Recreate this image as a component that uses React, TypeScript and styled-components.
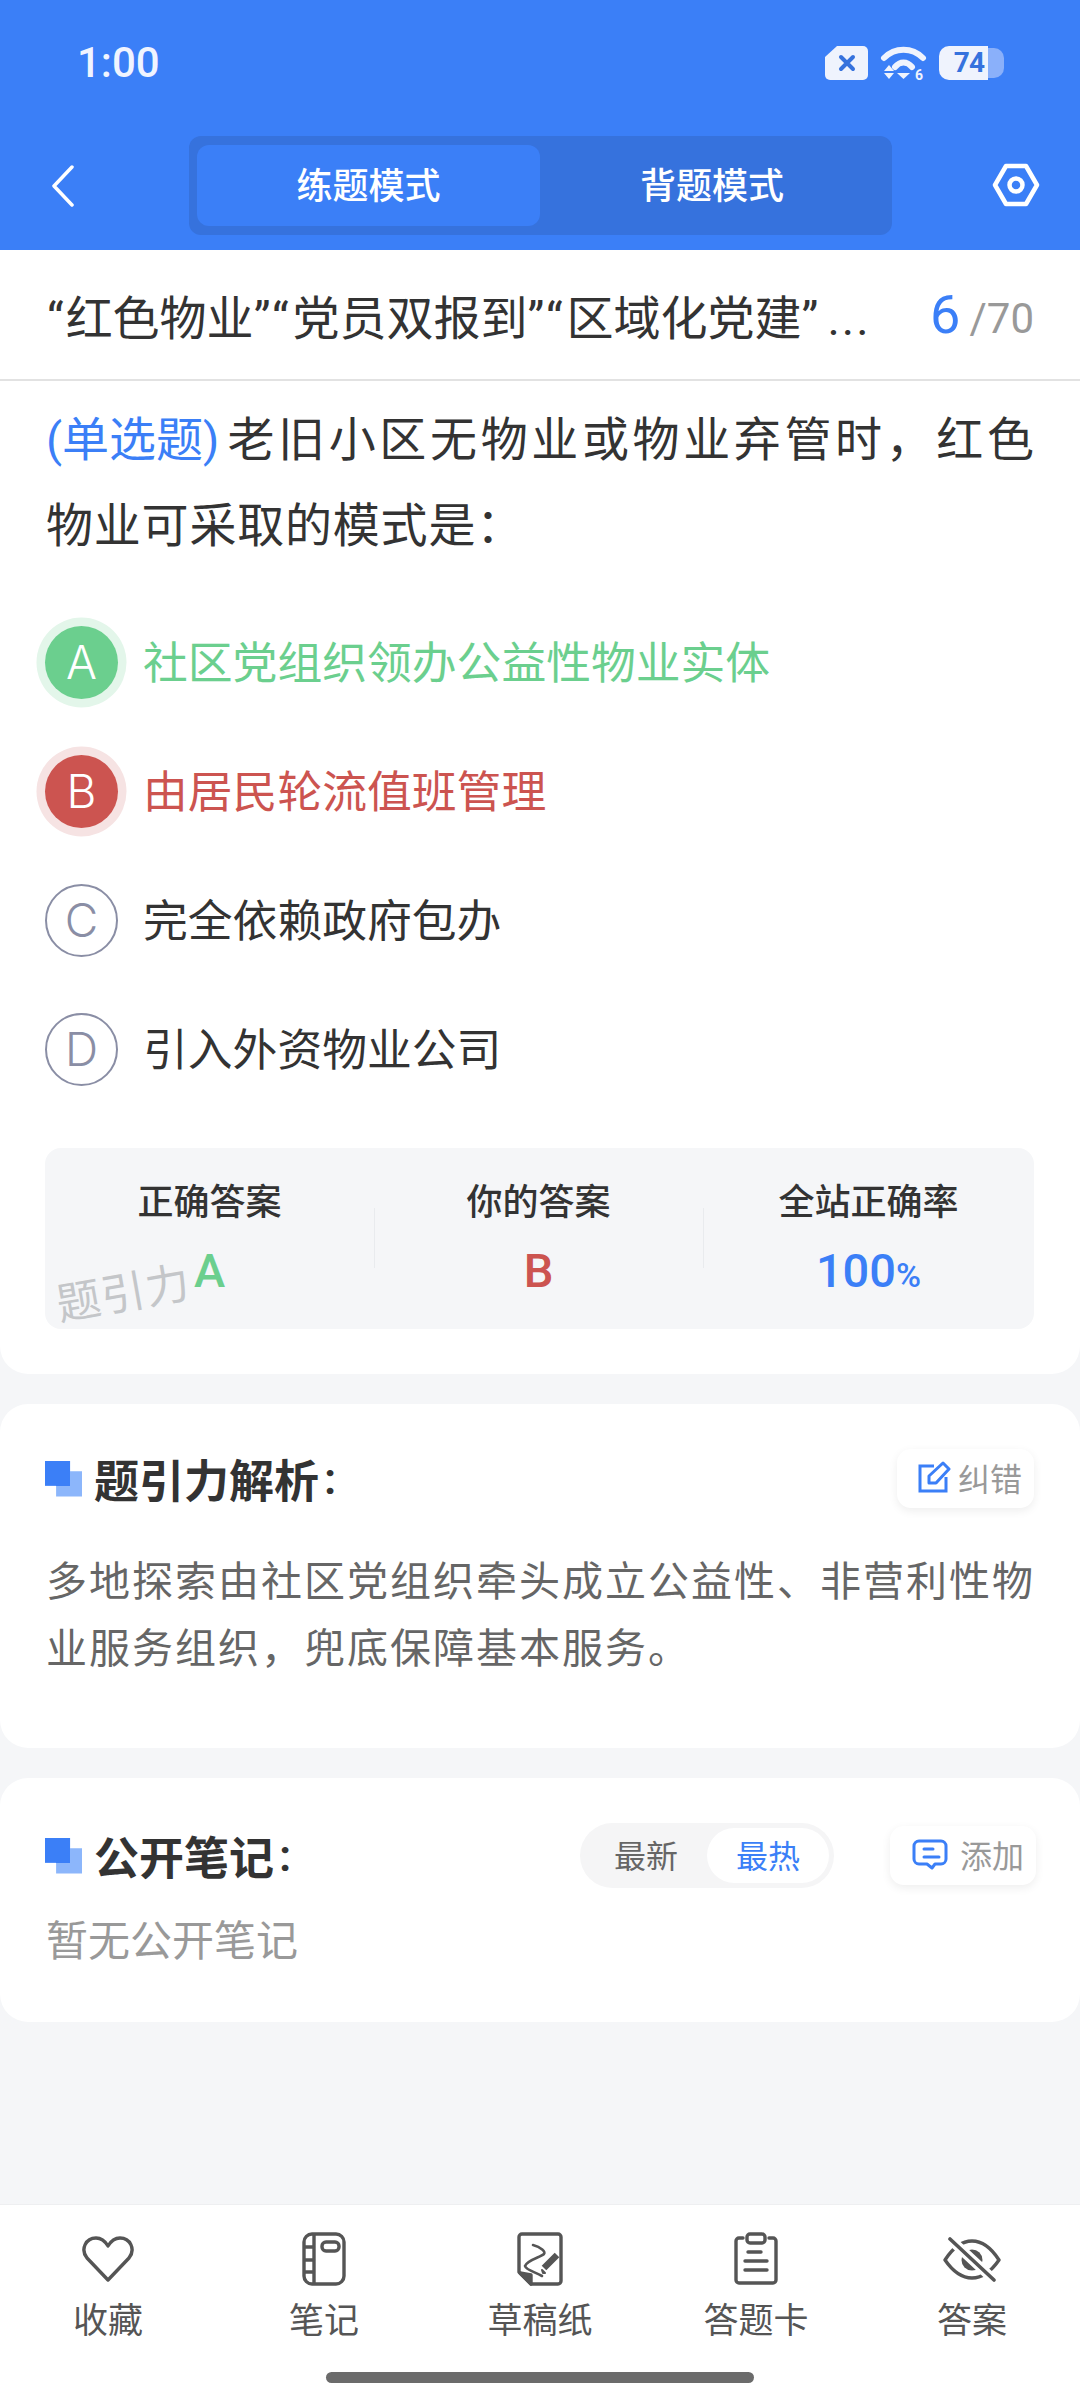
import React from "react";
import styled, { createGlobalStyle } from "styled-components";

const GlobalStyle = createGlobalStyle`
  html, body {
    margin: 0;
    padding: 0;
    background: #f5f6f8;
    font-family: "Roboto", "Noto Sans CJK SC", sans-serif;
  }
  * {
    box-sizing: border-box;
  }
`;

const options = [
  { key: "A", text: "社区党组织领办公益性物业实体", state: "right" },
  { key: "B", text: "由居民轮流值班管理", state: "wrong" },
  { key: "C", text: "完全依赖政府包办", state: "idle" },
  { key: "D", text: "引入外资物业公司", state: "idle" },
] as const;

const stateColor = {
  right: "#6bcf8e",
  wrong: "#cc5450",
  idle: "#333333",
};

const stateHalo = {
  right: "#e3f6ea",
  wrong: "#f6e3e3",
  idle: "transparent",
};

const BackIcon = () => (
  <svg width="24" height="42" viewBox="0 0 24 42" fill="none" stroke="#fff" strokeWidth="3.5" strokeLinecap="round" strokeLinejoin="round">
    <path d="M21 2 L3 21 L21 40" />
  </svg>
);

const HexIcon = () => (
  <svg width="48" height="44" viewBox="0 0 48 44" fill="none" stroke="#fff" strokeWidth="4.5" strokeLinejoin="round">
    <path d="M3 22 L14 3 H34 L45 22 L34 41 H14 Z" />
    <circle cx="24" cy="22" r="6.5" />
  </svg>
);

const SimIcon = () => (
  <svg width="43" height="34" viewBox="0 0 43 34">
    <path d="M12 0 H38 a5 5 0 0 1 5 5 V29 a5 5 0 0 1 -5 5 H5 a5 5 0 0 1 -5 -5 V11 Z" fill="#eff3fd" />
    <path d="M16 11 L28 23 M28 11 L16 23" stroke="#3672dd" strokeWidth="4" strokeLinecap="round" />
  </svg>
);

const WifiIcon = () => (
  <svg width="47" height="37" viewBox="0 0 47 37" fill="none">
    <path d="M4 12 C 15 1 32 1 43 12" stroke="#eff3fd" strokeWidth="6" strokeLinecap="round" />
    <path d="M15 21 C 20 15 27 15 32 21" stroke="#eff3fd" strokeWidth="6" strokeLinecap="round" />
    <path d="M17 27 H30 L23.5 33 Z" fill="#eff3fd" />
    <path d="M9 19 L14 25 H4 Z M4 27 H14 L9 33 Z" fill="#eff3fd" />
    <text x="35" y="34" fontFamily="Roboto" fontWeight="700" fontSize="14" fill="#eff3fd">6</text>
  </svg>
);

const EditIcon = () => (
  <svg width="34" height="32" viewBox="0 0 34 32" fill="none" stroke="#3b7ff7" strokeWidth="3">
    <path d="M16 5 H2 V30 H28 V16" />
    <path d="M11 22 V15 L25 2 L31 8 L18 22 Z" strokeLinejoin="round" />
  </svg>
);

const CommentIcon = () => (
  <svg width="36" height="31" viewBox="0 0 36 31" fill="none" stroke="#3b7ff7" strokeWidth="3" strokeLinecap="round" strokeLinejoin="round">
    <path d="M7 2 H29 a5 5 0 0 1 5 5 V20 a5 5 0 0 1 -5 5 H23 l-3 4 -5 -4 H7 a5 5 0 0 1 -5 -5 V7 a5 5 0 0 1 5 -5 Z" />
    <path d="M12 10 H21 M12 18 H27" />
  </svg>
);

const HeartIcon = () => (
  <svg width="52" height="46" viewBox="0 0 52 46" fill="none" stroke="#555" strokeWidth="3.4" strokeLinejoin="round">
    <path d="M26 44 L5 22 C -2 13 4 2 14 2 C 19 2 23 5 26 10 C 29 5 33 2 38 2 C 48 2 54 13 47 22 Z" />
  </svg>
);

const NotebookIcon = () => (
  <svg width="44" height="54" viewBox="0 0 44 54" fill="none" stroke="#555" strokeWidth="3.4">
    <rect x="2" y="2" width="40" height="50" rx="8" />
    <path d="M12 2 V52 M2 15 H12 M2 28 H12 M2 40 H12" />
    <rect x="20" y="10" width="17" height="9" rx="4" />
  </svg>
);

const DraftIcon = () => (
  <svg width="46" height="54" viewBox="0 0 46 54" fill="none" stroke="#555" strokeWidth="3.4" strokeLinejoin="round">
    <path d="M5 2 H41 a3 3 0 0 1 3 3 V49 a3 3 0 0 1 -3 3 H14 L2 40 V5 a3 3 0 0 1 3 -3 Z" />
    <path d="M3 41 L14 52 V43 Z" fill="#555" />
    <path d="M16 13 C 24 15 29 20 27 22 C 24 25 10 28 8 34 C 9 38 18 40 25 44" strokeWidth="2.6" strokeLinecap="round" />
    <path d="M27 36 L40 23" strokeWidth="6.5" />
    <path d="M26 41 L25 38 L28 41 Z" fill="#555" strokeWidth="2" />
  </svg>
);

const CardIcon = () => (
  <svg width="46" height="54" viewBox="0 0 46 54" fill="none" stroke="#555" strokeWidth="3.4" strokeLinecap="round" strokeLinejoin="round">
    <path d="M10 6 H6 a3 3 0 0 0 -3 3 V48 a3 3 0 0 0 3 3 H40 a3 3 0 0 0 3 -3 V9 a3 3 0 0 0 -3 -3 H36" />
    <rect x="14" y="2" width="18" height="9" rx="3" />
    <path d="M15 20 H28 M12 29 H34 M12 38 H34" />
  </svg>
);

const EyeIcon = () => (
  <svg width="58" height="46" viewBox="0 0 58 46" fill="none" strokeLinecap="round" strokeLinejoin="round">
    <path d="M2 24 C 11 10 20 5 29 5 C 38 5 47 10 56 24 C 47 37 38 42 29 42 C 20 42 11 37 2 24 Z" stroke="#555" strokeWidth="3.4" />
    <circle cx="29" cy="24" r="10.5" fill="#555" />
    <path d="M7 3 L51 44" stroke="#fff" strokeWidth="10" />
    <path d="M7 3 L51 44" stroke="#555" strokeWidth="3.6" />
  </svg>
);

const tools = [
  { label: "收藏", icon: <HeartIcon /> },
  { label: "笔记", icon: <NotebookIcon /> },
  { label: "草稿纸", icon: <DraftIcon /> },
  { label: "答题卡", icon: <CardIcon /> },
  { label: "答案", icon: <EyeIcon /> },
];

export default function App() {
  return (
    <Page>
      <GlobalStyle />
      <Header>
        <StatusBar>
          <Clock>1:00</Clock>
          <StatusIcons>
            <SimIcon />
            <WifiIcon />
            <Battery>
              <BatteryLevel>74</BatteryLevel>
              <BatteryRest />
            </Battery>
          </StatusIcons>
        </StatusBar>
        <NavBar>
          <BackButton>
            <BackIcon />
          </BackButton>
          <ModeTabs>
            <ModeTab $active>练题模式</ModeTab>
            <ModeTab>背题模式</ModeTab>
          </ModeTabs>
          <SettingButton>
            <HexIcon />
          </SettingButton>
        </NavBar>
      </Header>

      <Main>
        <QuestionCard>
          <TitleRow>
            <PaperTitle>
              <Spaced $gap={2}>“</Spaced>红色物业<Spaced $gap={4}>”“</Spaced>党员双报到<Spaced $gap={4}>”“</Spaced>区域化党建
              <Spaced $gap={9}>”</Spaced>
              <Spaced $gap={2}>...</Spaced>
            </PaperTitle>
            <Progress>
              <ProgressNow>6</ProgressNow>
              <ProgressTotal>/70</ProgressTotal>
            </Progress>
          </TitleRow>

          <Question>
            <QuestionFirstLine>
              <QuestionType>(单选题)</QuestionType>
              <QuestionRest>老旧小区无物业或物业弃管时，红色</QuestionRest>
            </QuestionFirstLine>
            <QuestionLine>物业可采取的模式是：</QuestionLine>
          </Question>

          <OptionList>
            {options.map((o) => (
              <OptionRow key={o.key}>
                <OptionBadge $state={o.state}>{o.key}</OptionBadge>
                <OptionText $state={o.state}>{o.text}</OptionText>
              </OptionRow>
            ))}
          </OptionList>

          <StatsBox>
            <Stat>
              <StatLabel>正确答案</StatLabel>
              <StatValue $color="#6bcf8e">A</StatValue>
            </Stat>
            <Stat>
              <StatLabel>你的答案</StatLabel>
              <StatValue $color="#cc5450">B</StatValue>
            </Stat>
            <Stat>
              <StatLabel>全站正确率</StatLabel>
              <StatValue $color="#3b7ff7">
                100<Percent>%</Percent>
              </StatValue>
            </Stat>
            <Watermark>题引力</Watermark>
          </StatsBox>
        </QuestionCard>

        <SectionCard>
          <SectionHeader>
            <SectionTitle>
              <Marker />
              题引力解析<Colon>:</Colon>
            </SectionTitle>
            <ActionButton $pad={21} $gap={6}>
              <EditIcon />
              纠错
            </ActionButton>
          </SectionHeader>
          <Analysis>多地探索由社区党组织牵头成立公益性、非营利性物业服务组织，兜底保障基本服务。</Analysis>
        </SectionCard>

        <NotesCard>
          <SectionHeader>
            <SectionTitle>
              <Marker />
              公开笔记<Colon>:</Colon>
            </SectionTitle>
            <NotesActions>
              <SortSwitch>
                <SortItem>最新</SortItem>
                <SortItem $active>最热</SortItem>
              </SortSwitch>
              <ActionButton $pad={22} $gap={12}>
                <CommentIcon />
                添加
              </ActionButton>
            </NotesActions>
          </SectionHeader>
          <EmptyNotes>暂无公开笔记</EmptyNotes>
        </NotesCard>
      </Main>

      <BottomBar>
        <ToolRow>
          {tools.map((t) => (
            <Tool key={t.label}>
              <ToolIcon>{t.icon}</ToolIcon>
              <ToolLabel>{t.label}</ToolLabel>
            </Tool>
          ))}
        </ToolRow>
        <HomeIndicator />
      </BottomBar>
    </Page>
  );
}

const Page = styled.div`
  width: 1080px;
  height: 2400px;
  display: flex;
  flex-direction: column;
  overflow: hidden;
  background: #f5f6f8;
`;

const Header = styled.header`
  height: 250px;
  background: #3b7ff7;
  display: flex;
  flex-direction: column;
`;

const StatusBar = styled.div`
  height: 136px;
  padding: 46px 76px 0 77px;
  display: flex;
  justify-content: space-between;
  align-items: flex-start;
`;

const Clock = styled.div`
  font-size: 42px;
  font-weight: 500;
  line-height: 34px;
  color: #f0f4ff;
`;

const StatusIcons = styled.div`
  display: flex;
  align-items: flex-start;
  gap: 12px;
  svg {
    display: block;
  }
`;

const Battery = styled.div`
  display: flex;
  height: 34px;
`;

const BatteryLevel = styled.div`
  width: 49px;
  padding-right: 4px;
  background: #eff3fd;
  border-radius: 10px 0 0 10px;
  font-size: 28px;
  font-weight: 700;
  line-height: 34px;
  letter-spacing: -1px;
  text-align: right;
  color: #3672dd;
`;

const BatteryRest = styled.div`
  width: 16px;
  margin: 2px 0;
  background: #8ab0fa;
  border-radius: 0 10px 10px 0;
`;

const NavBar = styled.div`
  display: grid;
  grid-template-columns: 189px 703px 1fr;
  align-items: center;
  height: 99px;
`;

const BackButton = styled.div`
  padding-left: 51px;
  svg {
    display: block;
  }
`;

const SettingButton = styled.div`
  padding: 0 0 2px 100px;
  svg {
    display: block;
  }
`;

const ModeTabs = styled.div`
  height: 99px;
  padding: 9px 8px;
  background: #3672dd;
  border-radius: 12px;
  display: grid;
  grid-template-columns: 343px 1fr;
`;

const ModeTab = styled.div<{ $active?: boolean }>`
  display: flex;
  align-items: center;
  justify-content: center;
  padding-bottom: 5px;
  border-radius: 12px;
  font-size: 36px;
  font-weight: 500;
  color: #fff;
  background: ${(p) => (p.$active ? "#3b7ff7" : "transparent")};
`;

const Main = styled.main`
  flex: 1;
  display: flex;
  flex-direction: column;
  gap: 30px;
`;

const QuestionCard = styled.section`
  background: #fff;
  border-radius: 0 0 28px 28px;
  padding-bottom: 45px;
`;

const TitleRow = styled.div`
  height: 131px;
  padding: 0 46px 0 47px;
  border-bottom: 2px solid #e2e2e2;
  display: flex;
  align-items: center;
  justify-content: space-between;
`;

const PaperTitle = styled.div`
  font-size: 47px;
  color: #333;
  white-space: nowrap;
`;

const Spaced = styled.span<{ $gap: number }>`
  letter-spacing: ${(p) => p.$gap}px;
`;

const Progress = styled.div`
  display: flex;
  align-items: baseline;
`;

const ProgressNow = styled.span`
  font-size: 54px;
  color: #3b7ff7;
  margin-right: 9px;
`;

const ProgressTotal = styled.span`
  font-size: 42px;
  color: #999;
`;

const Question = styled.div`
  padding: 16px 46px 0;
  font-size: 47px;
  line-height: 86px;
  color: #333;
`;

const QuestionLine = styled.div`
  letter-spacing: 0.8px;
`;

const QuestionFirstLine = styled.div`
  display: flex;
  gap: 8px;
`;

const QuestionType = styled.span`
  flex: none;
  color: #3b7ff7;
`;

const QuestionRest = styled.span`
  flex: 1;
  text-align: justify;
  text-align-last: justify;
`;

const OptionList = styled.div`
  margin-top: 48px;
  padding: 0 36px;
  display: flex;
  flex-direction: column;
  gap: 39px;
`;

const OptionRow = styled.div`
  height: 90px;
  display: flex;
  align-items: center;
  gap: 16px;
`;

const OptionBadge = styled.div<{ $state: "right" | "wrong" | "idle" }>`
  width: 73px;
  height: 73px;
  margin: 0 9px;
  flex: none;
  border-radius: 50%;
  display: flex;
  align-items: center;
  justify-content: center;
  font-family: "Inter", "Roboto", sans-serif;
  font-size: 46px;
  font-weight: 300;
  color: ${(p) => (p.$state === "idle" ? "#8a8ea5" : "#fff")};
  background: ${(p) => (p.$state === "idle" ? "#fff" : stateColor[p.$state])};
  border: ${(p) => (p.$state === "idle" ? "2px solid #8a8ea5" : "none")};
  box-shadow: 0 0 0 8.5px ${(p) => stateHalo[p.$state]};
`;

const OptionText = styled.div<{ $state: "right" | "wrong" | "idle" }>`
  padding-bottom: 6px;
  font-size: 44.8px;
  color: ${(p) => stateColor[p.$state]};
`;

const StatsBox = styled.div`
  position: relative;
  margin: 54px 46px 0 45px;
  height: 181px;
  padding-top: 30px;
  background: #f5f6f8;
  border-radius: 16px;
  display: grid;
  grid-template-columns: 329px 329px 1fr;
`;

const Stat = styled.div`
  position: relative;
  padding-top: 2px;
  text-align: center;
  & + &::before {
    content: "";
    position: absolute;
    left: 0;
    top: 30px;
    width: 1px;
    height: 60px;
    background: #e9ebee;
  }
`;

const StatLabel = styled.div`
  font-size: 36px;
  font-weight: 500;
  line-height: 46px;
  color: #333;
`;

const StatValue = styled.div<{ $color: string }>`
  margin-top: 22px;
  font-size: 47px;
  font-weight: 500;
  line-height: 46px;
  color: ${(p) => p.$color};
`;

const Percent = styled.span`
  font-size: 34px;
`;

const Watermark = styled.div`
  position: absolute;
  left: 11px;
  top: 121px;
  font-size: 44px;
  line-height: 50px;
  letter-spacing: 1px;
  color: #c4c6c9;
  transform: rotate(-10deg);
`;

const SectionCard = styled.section`
  height: 344px;
  padding: 45px 46px 0 45px;
  background: #fff;
  border-radius: 28px;
`;

const NotesCard = styled(SectionCard)`
  height: 244px;
  padding-top: 48px;
`;

const SectionHeader = styled.div`
  height: 59px;
  display: flex;
  align-items: center;
  justify-content: space-between;
`;

const SectionTitle = styled.div`
  display: flex;
  align-items: center;
  font-size: 45px;
  font-weight: 600;
  color: #333;
`;

const Colon = styled.span`
  margin-left: 5px;
`;

const Marker = styled.span`
  position: relative;
  width: 37px;
  height: 36px;
  margin-right: 12px;
  background: #8cb6fb;
  &::before {
    content: "";
    position: absolute;
    left: 0;
    top: 0;
    width: 25px;
    height: 25px;
    background: #3b7ff7;
  }
  clip-path: polygon(0 0, 68% 0, 68% 30%, 100% 30%, 100% 100%, 30% 100%, 30% 70%, 0 70%);
`;

const ActionButton = styled.div<{ $pad: number; $gap: number }>`
  height: 59px;
  padding: 0 12px 3px ${(p) => p.$pad}px;
  display: flex;
  align-items: center;
  gap: ${(p) => p.$gap}px;
  background: #fff;
  border-radius: 14px;
  box-shadow: 0 3px 10px rgba(0, 0, 0, 0.07);
  font-size: 32px;
  color: #999;
`;

const NotesActions = styled.div`
  margin-right: -2px;
  display: flex;
  align-items: center;
  gap: 56px;
`;

const SortSwitch = styled.div`
  width: 254px;
  height: 65px;
  padding: 5px;
  background: #f5f5f6;
  border-radius: 33px;
  display: grid;
  grid-template-columns: 122px 122px;
`;

const SortItem = styled.div<{ $active?: boolean }>`
  display: flex;
  align-items: center;
  justify-content: center;
  padding-bottom: 3px;
  border-radius: 28px;
  font-size: 32px;
  color: ${(p) => (p.$active ? "#3b7ff7" : "#666")};
  background: ${(p) => (p.$active ? "#fff" : "transparent")};
`;

const Analysis = styled.p`
  margin: 41px -6px 0 1px;
  font-size: 41px;
  line-height: 67px;
  letter-spacing: 2px;
  color: #666;
`;

const EmptyNotes = styled.div`
  margin: 30px 0 0 1px;
  font-size: 42px;
  line-height: 54px;
  color: #999;
`;

const BottomBar = styled.footer`
  height: 196px;
  background: #fff;
  border-top: 1px solid #eeeff1;
  display: flex;
  flex-direction: column;
  align-items: center;
`;

const ToolRow = styled.div`
  width: 100%;
  display: grid;
  grid-template-columns: repeat(5, 216px);
`;

const Tool = styled.div`
  display: flex;
  flex-direction: column;
  align-items: center;
`;

const ToolIcon = styled.div`
  height: 60px;
  margin-top: 24px;
  display: flex;
  align-items: center;
  justify-content: center;
  svg {
    display: block;
  }
`;

const ToolLabel = styled.div`
  margin-top: 11px;
  font-size: 35px;
  line-height: 44px;
  color: #555;
`;

const HomeIndicator = styled.div`
  width: 428px;
  height: 11px;
  margin-top: 28px;
  border-radius: 6px;
  background: #6b6b6b;
`;
